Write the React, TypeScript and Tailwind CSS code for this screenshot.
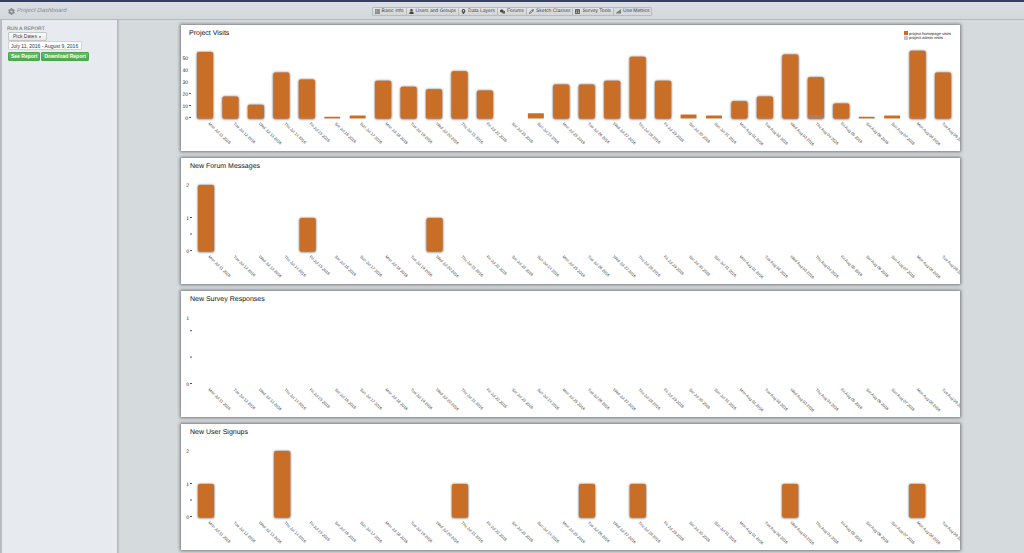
import { useId } from "react";
import type { ReactNode } from "react";
import { FaCog, FaUser, FaMapMarkerAlt, FaComments, FaTable, FaSignal, FaRegListAlt, FaCaretDown } from "react-icons/fa";
import { LuPencil } from "react-icons/lu";

const DAYS = [
  "Mon Jul 11", "Tue Jul 12", "Wed Jul 13", "Thu Jul 14", "Fri Jul 15", "Sat Jul 16", "Sun Jul 17",
  "Mon Jul 18", "Tue Jul 19", "Wed Jul 20", "Thu Jul 21", "Fri Jul 22", "Sat Jul 23", "Sun Jul 24",
  "Mon Jul 25", "Tue Jul 26", "Wed Jul 27", "Thu Jul 28", "Fri Jul 29", "Sat Jul 30", "Sun Jul 31",
  "Mon Aug 01", "Tue Aug 02", "Wed Aug 03", "Thu Aug 04", "Fri Aug 05", "Sat Aug 06", "Sun Aug 07",
  "Mon Aug 08", "Tue Aug 09",
].map((d) => d + " 2016");

type Point = Record<number, number>;
type Tick = { at: number; label?: string; dash?: boolean };

type ChartProps = {
  title: string;
  data: Point;
  secondary?: Point;
  unit: number;
  baseline: number;
  ticks: Tick[];
  inset: number;
  pitch: number;
  legend?: boolean;
};

const VISITS: Point = {
  ...[55, 18, 11, 38, 32, 1, 2, 31, 26, 24, 39, 23, 0, 4, 28, 28, 31, 51, 31, 3, 2, 14, 18, 53, 34, 12, 1, 2, 56, 38],
};

const NAV: { label: string; icon: ReactNode }[] = [
  { label: "Basic Info", icon: <FaRegListAlt /> },
  { label: "Users and Groups", icon: <FaUser /> },
  { label: "Data Layers", icon: <FaMapMarkerAlt /> },
  { label: "Forums", icon: <FaComments /> },
  { label: "Sketch Classes", icon: <LuPencil strokeWidth={3} /> },
  { label: "Survey Tools", icon: <FaTable /> },
  { label: "Use Metrics", icon: <FaSignal /> },
];

function Chart({ title, data, secondary = {}, unit, baseline, ticks, inset, pitch, legend }: ChartProps) {
  const glow = useId();
  return (
    <section className="bg-white shadow-[0_0_3px_1px_#77797b]">
      <svg viewBox="0 0 779 126" className="block h-auto w-full" role="img" aria-label={title} fontFamily="'Liberation Sans', Arial, sans-serif">
        <defs>
          <filter id={glow} filterUnits="userSpaceOnUse" x="0" y="0" width="779" height="126">
            <feDropShadow dx="0" dy="0.3" stdDeviation="1.1" floodColor="#30363e" floodOpacity="1" />
          </filter>
        </defs>
        <text x={inset - 8} y="10" fontSize="7" fill="#111">{title}</text>
        {ticks.map((t) => {
          const y = baseline - t.at * unit;
          return (
            <g key={t.at}>
              {t.label && <text x={inset - 9} y={y + 2} fontSize="5" textAnchor="end" fill="#222">{t.label}</text>}
              {t.dash && <rect x={inset - 8} y={y - 1} width="2" height="1" fill="#555" />}
            </g>
          );
        })}
        {DAYS.map((day, i) => {
          const value = data[i] ?? 0;
          const h = value * unit;
          const x = inset + i * pitch;
          const extra = secondary[i];
          return (
            <g key={day}>
              {value > 0 && (
                <rect x={x} y={baseline - h} width="16" height={h + 0.5} rx={h > 6 ? 1.5 : 0.5} fill="#c96e27" filter={h > 6 ? `url(#${glow})` : undefined} />
              )}
              {extra && <rect x={x} y={baseline - extra} width="16" height={extra} fill="#a8787c" />}
              <text transform={`translate(${27 + i * 25.3} ${baseline + 6}) rotate(44)`} fontSize="4" fill="#444">{day}</text>
            </g>
          );
        })}
        {legend && (
          <g fontSize="4" fill="#222">
            <rect x="723" y="6" width="4" height="4" fill="#c96e27" />
            <text x="728" y="10">project homepage visits</text>
            <rect x="723" y="11" width="4" height="4" fill="#c5c0dd" />
            <text x="728" y="14">project admin visits</text>
          </g>
        )}
      </svg>
    </section>
  );
}

const GREEN = "h-[9px] rounded-[1px] border border-[#4da64d] bg-linear-to-b from-[#60bf60] to-[#4dab4e] px-[2px] text-[5px] leading-[7px] font-bold text-white";

export default function App() {
  const halves: Tick[] = [{ at: 0, label: "0", dash: true }, { at: 0.5, dash: true }, { at: 1, label: "1", dash: true }, { at: 2, label: "2" }];
  return (
    <div className="flex min-h-screen flex-col border-t-2 border-[#343f61] bg-[#d5dadd] font-['Liberation_Sans',Arial,sans-serif] text-[5px] leading-[7px] text-[#444] [text-rendering:geometricPrecision]">
      <header className="relative flex h-[18px] items-center justify-center border-b border-[#b6babd] bg-linear-to-b from-[#dce0e4] to-[#d2d7da] pt-px">
        <h1 className="absolute left-2 flex items-center gap-[2px] text-[6px] text-[#848a90] italic">
          <FaCog className="size-[7px]" />
          Project Dashboard
        </h1>
        <nav className="flex h-[9px] divide-x divide-[#babec1] rounded-[1px] border border-[#b8bcbf] bg-linear-to-b from-[#e3e5e7] to-[#d2d4d6]">
          {NAV.map((n) => (
            <a key={n.label} href="#" className={"flex items-center gap-[2px] px-[2px] text-[5px] whitespace-nowrap text-[#444]" + (n.label === "Use Metrics" ? " bg-[#d6d9dd]" : "")}>
              {n.icon}
              {n.label}
            </a>
          ))}
        </nav>
      </header>
      <div className="flex flex-1">
        <aside className="flex w-[118px] shrink-0 flex-col items-start border-r border-l-2 border-r-[#b5bac0] border-l-[#b9bcc1] bg-[#e7ebf0] pt-[6px] pl-[5px] shadow-[1px_0_1px_#c0c4c8]">
          <h2 className="text-[5px] leading-[6px] font-bold text-[#8b8f95]">RUN A REPORT</h2>
          <div className="flex flex-col items-start pl-px">
            <button className="flex h-[9px] items-center gap-px rounded-[1px] border border-[#c4c6c9] bg-linear-to-b from-white to-[#e6e6e6] px-1 text-[5px] text-[#444]">
              Pick Dates
              <FaCaretDown className="size-[4px]" />
            </button>
            <input aria-label="Date range" defaultValue="July 11, 2016 - August 9, 2016" className="h-[9px] w-[74px] rounded-[1px] border border-[#d0d3d8] bg-white px-[2px] text-[5px] text-[#333]" />
            <div className="mt-[2px] flex gap-px">
              <button className={GREEN}>See Report</button>
              <button className={GREEN}>Download Report</button>
            </div>
          </div>
        </aside>
        <main className="flex min-w-0 flex-1 flex-col gap-[7px] pt-[5px] pr-16 pb-[3px] pl-[63px]">
          <Chart title="Project Visits" data={VISITS} secondary={{ 0: 1, 4: 1, 9: 1, 22: 1, 24: 3, 28: 1 }} unit={1.2} baseline={93} inset={16} pitch={25.45} legend
            ticks={[0, 10, 20, 30, 40, 50].map((n) => ({ at: n, label: String(n), dash: n < 30 }))} />
          <Chart title="New Forum Messages" data={{ 0: 2, 4: 1, 9: 1 }} unit={33} baseline={93} inset={17} pitch={25.4} ticks={halves} />
          <Chart title="New Survey Responses" data={{}} unit={66} baseline={93} inset={17} pitch={25.4}
            ticks={[{ at: 0, label: "0", dash: true }, { at: 0.4, dash: true }, { at: 0.8, dash: true }, { at: 1, label: "1" }]} />
          <Chart title="New User Signups" data={{ 0: 1, 3: 2, 10: 1, 15: 1, 17: 1, 23: 1, 28: 1 }} unit={33} baseline={93} inset={17} pitch={25.4} ticks={halves} />
        </main>
      </div>
    </div>
  );
}
